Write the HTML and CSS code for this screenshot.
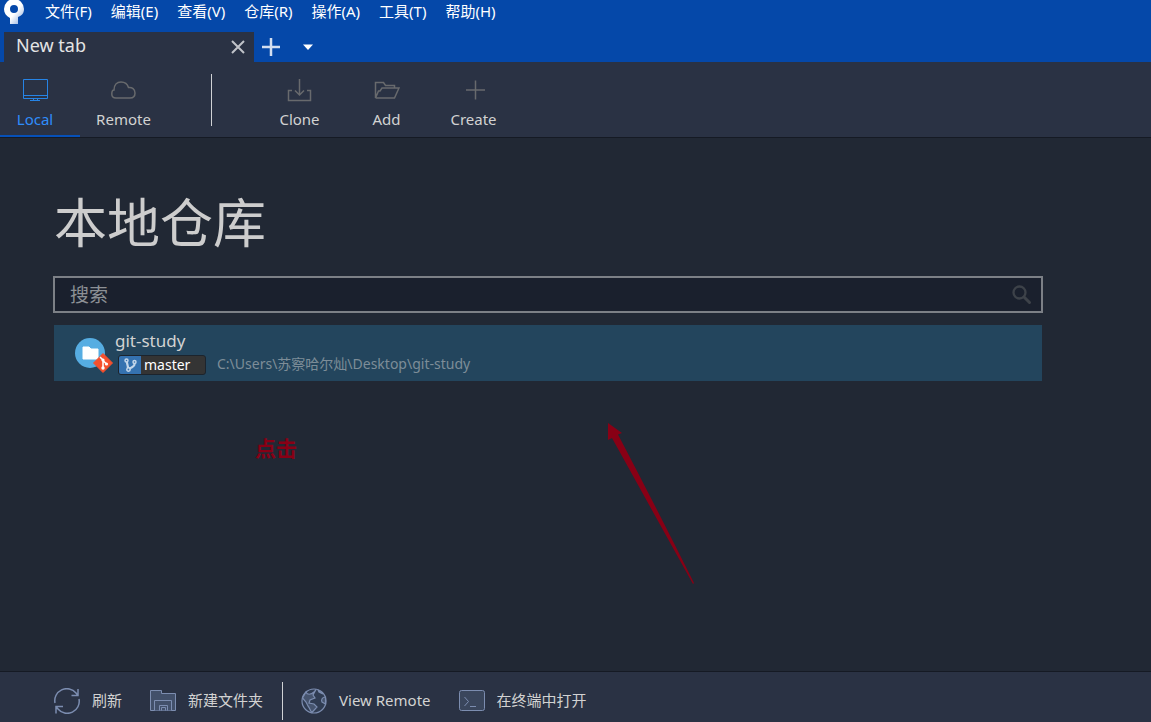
FILE: index.html
```html
<!DOCTYPE html>
<html lang="zh-CN">
<head>
<meta charset="utf-8">
<meta name="viewport" content="width=device-width, initial-scale=1">
<title>本地仓库</title>
<link rel="stylesheet" href="styles.css">
</head>
<body>
<div class="app">
  <header class="titlebar">
    <div class="menubar">
      <svg class="logo" width="22" height="24" viewBox="0 0 22 24" aria-hidden="true">
        <defs><linearGradient id="stem" x1="0" y1="0" x2="1" y2="1"><stop offset=".55" stop-color="#fff"/><stop offset="1" stop-color="#7fa2da"/></linearGradient></defs>
        <path fill="url(#stem)" fill-rule="evenodd" d="M10 -1A10 10 0 0 1 20 9C20 14 17 16 14 17V24H6V18C2 16 0 13 0 9A10 10 0 0 1 10 -1ZM10 5A4 4 0 1 0 10 13A4 4 0 1 0 10 5Z"/>
      </svg>
      <nav class="menus">
        <button class="menu">文件(F)</button>
        <button class="menu">编辑(E)</button>
        <button class="menu">查看(V)</button>
        <button class="menu">仓库(R)</button>
        <button class="menu">操作(A)</button>
        <button class="menu">工具(T)</button>
        <button class="menu">帮助(H)</button>
      </nav>
    </div>
    <div class="tabs">
      <div class="tab">
        <span>New tab</span>
        <button class="icon-button" aria-label="Close tab">
          <svg width="14" height="14" viewBox="0 0 14 14"><path d="M1 1 13 13M13 1 1 13" stroke="#c0c3c9" stroke-width="2"/></svg>
        </button>
      </div>
      <button class="icon-button tab-add" aria-label="Add tab">
        <svg width="18" height="18" viewBox="0 0 18 18"><path d="M9 0V18M0 9H18" stroke="#d3def0" stroke-width="2.500"/></svg>
      </button>
      <button class="icon-button tab-more" aria-label="More tabs">
        <svg width="10" height="6" viewBox="0 0 10 6"><path d="M0 .500H10L5 6Z" fill="#fff"/></svg>
      </button>
    </div>
  </header>

  <div class="toolbar">
    <button class="tool tool-active">
      <svg width="26" height="24" viewBox="0 0 26 24" fill="none" stroke="#2684e6"><path d="M1.500 1.500H25.500V20.500H1.500ZM1.500 17.500H25.500M11.500 20.500V22.500M15.500 20.500V22.500M8 22.500H18"/></svg>
      <span>Local</span>
    </button>
    <button class="tool">
      <svg width="26" height="24" viewBox="0 0 26 24" fill="none" stroke="#686a6d" stroke-width="1.500"><path d="M5 20C2 20 .800 18 .800 16C.800 13.500 2 12 3 12C3 7 6 4 10 4C14 4 16.500 6 17.500 9.500C21 9 24 11 24 15C24 18 22 20 19 20Z"/></svg>
      <span>Remote</span>
    </button>
    <span class="tool-divider"></span>
    <button class="tool">
      <svg width="26" height="24" viewBox="0 0 26 24" fill="none" stroke="#686a6d" stroke-width="1.500"><path d="M12.500 1V17M8 12.500 12.500 17 17 12.500M5 12.500H1.500V22.500H23.500V12.500H20"/></svg>
      <span>Clone</span>
    </button>
    <button class="tool">
      <svg width="26" height="24" viewBox="0 0 26 24" fill="none" stroke="#686a6d" stroke-width="1.500"><path d="M1.500 20V4.500H9.500L11.500 7.500H20.500V10M1.500 20H20.500L25 10H8L6 13H4.500L1.500 20"/></svg>
      <span>Add</span>
    </button>
    <button class="tool">
      <svg width="26" height="24" viewBox="0 0 26 24" fill="none" stroke="#686a6d" stroke-width="1.500"><path d="M14.500 2.500V21.500M5 12H24"/></svg>
      <span>Create</span>
    </button>
  </div>

  <main class="content">
    <h1 class="heading">本地仓库</h1>
    <label class="search">
      <input class="search-input" type="text" placeholder="搜索" aria-label="搜索">
      <svg width="20" height="20" viewBox="0 0 20 20" fill="none" stroke="#3d4249" aria-hidden="true"><circle cx="7.500" cy="7.500" r="6" stroke-width="2.300"/><path d="M12 12 17.500 17.500" stroke-width="3" stroke-linecap="round"/></svg>
    </label>
    <div class="repo">
      <svg class="repo-icon" width="38" height="36" viewBox="0 0 38 36" aria-hidden="true">
        <circle cx="15" cy="15" r="15" fill="#56ade2"/>
        <path d="M8 9H14L16 11H23V21H8Z" fill="#fff" stroke="#fff" stroke-linejoin="round"/>
        <path d="M28 15.500 37.500 25 28 34.500 18.500 25Z" fill="#f6502d" stroke="#f6502d" stroke-linejoin="round"/>
        <path d="M25 19 28 22V30M28 22.500 31.500 26" fill="none" stroke="#fff" stroke-width="1.500"/>
        <g fill="#fff"><circle cx="28" cy="22" r="1.600"/><circle cx="28" cy="30" r="1.700"/><circle cx="31.500" cy="26" r="1.600"/></g>
      </svg>
      <div class="repo-text">
        <span class="repo-name">git-study</span>
        <div class="repo-detail">
          <span class="branch">
            <span class="branch-icon"><svg width="13" height="14" viewBox="0 0 13 14" fill="none" stroke="#c3d6ea" stroke-width="1.500" aria-hidden="true"><circle cx="2.500" cy="2.500" r="1.500"/><circle cx="10.500" cy="4" r="1.500"/><circle cx="4.500" cy="11.500" r="1.700"/><path d="M2.800 4 4.200 10M10.500 6C10.500 8.500 8 9.500 5 10.500" stroke-width="2.200"/></svg></span>
            <span class="branch-name">master</span>
          </span>
          <span class="path">C:\Users\苏察哈尔灿\Desktop\git-study</span>
        </div>
      </div>
    </div>
    <span class="note">点击</span>
    <svg class="arrow" width="88" height="162" viewBox="0 0 88 162" aria-hidden="true"><path d="M1 0 15 10 11 11.500Q50 86 87 160L86 161Q46 89 5 15L1 17Z" fill="#880015"/></svg>
  </main>

  <footer class="footer">
    <button class="action">
      <svg width="26" height="26" viewBox="0 0 26 26" fill="none" stroke="#7c8db0" stroke-width="1.500"><path d="M1 15A12 12 0 0 1 22 5L24 7.500M24 1V7.500H17.500M25 11A12 12 0 0 1 4 21L2 18.500M2 25.500V18.500H9"/></svg>
      <span>刷新</span>
    </button>
    <button class="action">
      <svg width="26" height="26" viewBox="0 0 26 26" fill="#42506a" stroke="#7c8db0"><path d="M.500 2.500H11.500V5.500H25.500V22.500H.500Z"/><path d="M4.500 22.500V12.500H21.500V22.500M9.500 22.500V17.500H17.500V22.500M11.500 22.500V19.500H15.500V22.500"/></svg>
      <span>新建文件夹</span>
    </button>
    <span class="footer-divider"></span>
    <button class="action">
      <svg width="26" height="26" viewBox="0 0 26 26" stroke="#7c8db0" stroke-width="1.200"><circle cx="13" cy="13" r="12" fill="#303c52"/><path d="M5 4C6 7 10 7 13 4L15 1.500L12 7 14 10 9 12 8 15 13 16 16 19 11 24.500C9 23 9 20 7 18L5 14 1.500 10Z" fill="#46546e"/><path d="M24.500 9C21 9 20 12 21 14L24.500 16ZM17 2 18 4 22 6Z" fill="#46546e"/></svg>
      <span>View Remote</span>
    </button>
    <button class="action">
      <svg width="26" height="26" viewBox="0 0 26 26" fill="#3a465c" stroke="#7c8db0"><rect x=".500" y="2.500" width="25" height="20" rx="2"/><path d="M5.500 9 9.500 13.500 5.500 18M11 18.500H17" fill="none"/></svg>
      <span>在终端中打开</span>
    </button>
  </footer>
</div>
</body>
</html>
```
FILE: styles.css
```css
* { box-sizing: border-box; }

body {
  margin: 0;
  background: #212834;
  color: #d2d2d2;
  font: 15px/20px "Noto Sans", "Noto Sans CJK SC", sans-serif;
}

button {
  padding: 0;
  border: 0;
  background: none;
  color: inherit;
  font: inherit;
}

svg { display: block; flex: none; }

.app { display: flex; flex-direction: column; min-height: 100vh; }

.titlebar { background: #0548a9; }

.menubar {
  display: flex;
  align-items: flex-start;
  height: 32px;
  padding-left: 4px;
}

.menus { display: flex; gap: 19px; padding: 1px 0 0 19px; }

.menu { color: #fff; }

.tabs { display: flex; align-items: center; height: 30px; padding-left: 4px; }

.tab {
  display: flex;
  align-items: center;
  justify-content: space-between;
  width: 250px;
  height: 30px;
  padding: 0 9px 0 12px;
  background: #2a3244;
  color: #e4e4e4;
  font-size: 18px;
}

.tab span { padding-bottom: 4px; }

.icon-button { display: grid; place-items: center; }
.tab-add { margin-left: 8px; }
.tab-more { margin-left: 23px; }

.toolbar {
  display: flex;
  height: 76px;
  border-bottom: 1px solid #151a24;
  background: #2a3244;
}

.tool {
  display: flex;
  flex-direction: column;
  align-items: center;
  gap: 7px;
  width: 87px;
  padding-top: 16px;
}

.tool-active {
  width: 80px;
  padding-right: 10px;
  border-bottom: 2px solid #0650b8;
  color: #2f8dfa;
}

.tool-divider {
  width: 1px;
  height: 52px;
  margin: 12px 44px 0;
  background: #d0d2d5;
}

.content {
  position: relative;
  flex: 1;
  padding: 50px 108px 0 53px;
}

.heading {
  margin: 0 0 18px;
  padding-left: 1px;
  color: #cdcdcd;
  font-size: 53px;
  font-weight: 400;
  line-height: 70px;
}

.search {
  display: flex;
  align-items: center;
  height: 37px;
  padding: 0 9px 0 15px;
  border: 2px solid #7c8086;
  background: #1a202d;
}

.search-input {
  flex: 1;
  min-width: 0;
  padding: 0;
  border: 0;
  outline: 0;
  background: none;
  color: #d2d2d2;
  font: inherit;
  font-size: 19px;
}

.search-input::placeholder { color: #8c9095; opacity: 1; }

.repo {
  display: flex;
  gap: 2px;
  height: 56px;
  margin: 12px 1px 0;
  padding-left: 21px;
  background: #23455d;
}

.repo-icon { margin-top: 13px; }

.repo-text { display: flex; flex-direction: column; gap: 1px; padding-top: 4px; }

.repo-name { font-size: 17px; line-height: 24px; }

.repo-detail { display: flex; align-items: center; gap: 11px; padding-left: 3px; }

.branch {
  display: flex;
  align-items: stretch;
  width: 88px;
  height: 20px;
  overflow: hidden;
  border: 1px solid #1c242d;
  border-radius: 3px;
  background: #343434;
  color: #fff;
  font-size: 14px;
  line-height: 17px;
}

.branch-icon { display: grid; place-items: center; width: 22px; background: #3572b0; }

.branch-name { padding-left: 3px; }

.path { padding-bottom: 2px; color: #7d8d98; font-size: 14px; }

.note {
  position: absolute;
  top: 298px;
  left: 255px;
  color: #880015;
  font-size: 21px;
  font-weight: 700;
  line-height: 24px;
}

.arrow { position: absolute; top: 285px; left: 607px; }

.footer {
  display: flex;
  align-items: center;
  height: 51px;
  padding: 7px 0 0 54px;
  border-top: 1px solid #151a24;
  background: #2a3244;
}

.action { display: flex; align-items: center; gap: 12px; margin-right: 28px; }

.action span { padding-bottom: 2px; }

.footer-divider {
  width: 1px;
  height: 38px;
  margin: 0 18px 0 -9px;
  background: #d0d2d5;
}
```
